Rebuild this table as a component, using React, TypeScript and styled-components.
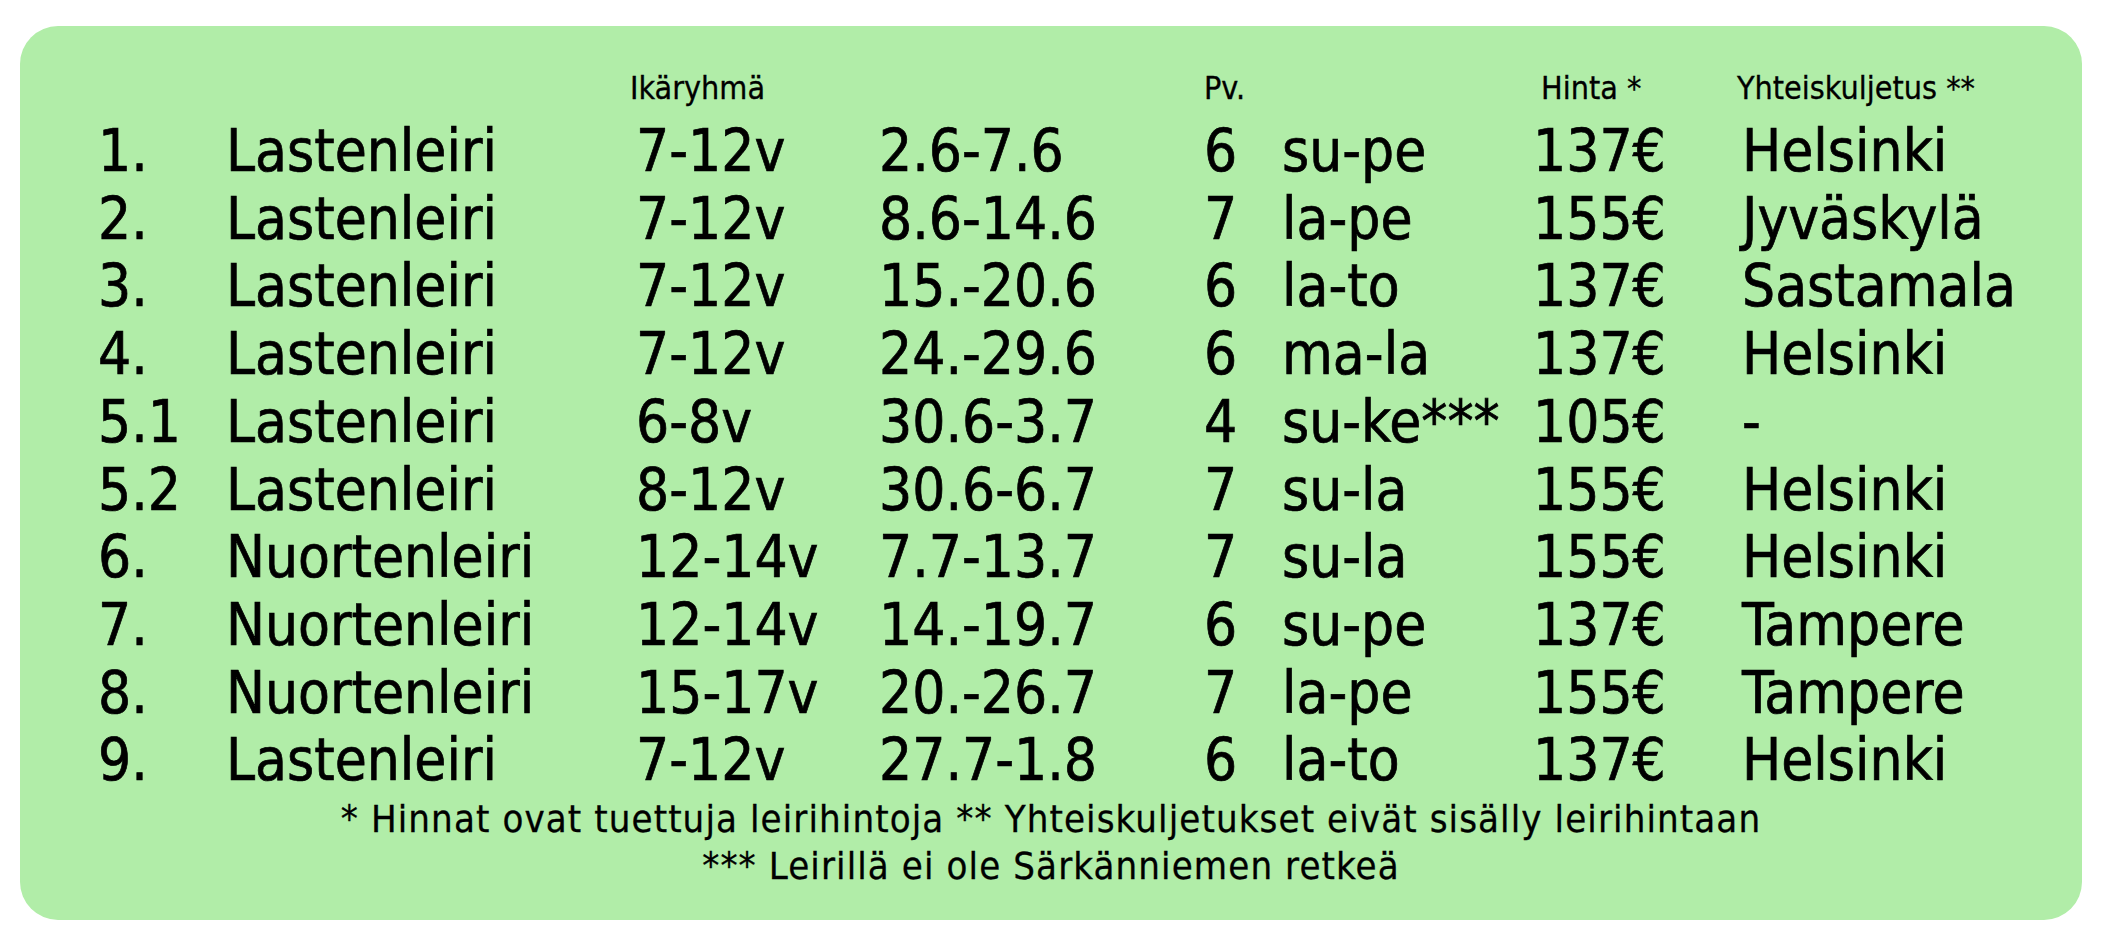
import styled, { createGlobalStyle } from "styled-components";

const GlobalStyle = createGlobalStyle`
  html, body {
    margin: 0;
    padding: 0;
    background: #ffffff;
  }
  body {
    font-family: "DejaVu Sans Condensed", "DejaVu Sans", sans-serif;
    color: #000;
  }
`;

const Page = styled.div`
  padding: 26px 0 21px 20px;
`;

const Card = styled.div`
  box-sizing: border-box;
  width: 2062px;
  height: 894px;
  padding-top: 42px;
  background: #b1eda8;
  border-radius: 38px;
`;

const Table = styled.div`
  margin-left: 78px;
  display: grid;
  grid-template-columns: 128px 410px 243px 325px 78px 251px 209px auto;
`;

const HeadCell = styled.div<{ $shift?: number }>`
  font-size: 32px;
  line-height: 40px;
  height: 40px;
  margin-bottom: 10px;
  white-space: nowrap;
  -webkit-text-stroke: 0.3px #000;
  transform: translateX(${(p) => p.$shift ?? 0}px);
`;

const Cell = styled.div`
  font-size: 58px;
  line-height: 67.7px;
  white-space: nowrap;
  -webkit-text-stroke: 0.7px #000;
`;

const Notes = styled.div`
  text-align: center;
  font-size: 38px;
  letter-spacing: 1.1px;
  line-height: 47px;
  margin-top: 1px;
  -webkit-text-stroke: 0.3px #000;
`;

type Row = [string, string, string, string, string, string, string, string];

const rows: Row[] = [
  ["1.", "Lastenleiri", "7-12v", "2.6-7.6", "6", "su-pe", "137€", "Helsinki"],
  ["2.", "Lastenleiri", "7-12v", "8.6-14.6", "7", "la-pe", "155€", "Jyväskylä"],
  ["3.", "Lastenleiri", "7-12v", "15.-20.6", "6", "la-to", "137€", "Sastamala"],
  ["4.", "Lastenleiri", "7-12v", "24.-29.6", "6", "ma-la", "137€", "Helsinki"],
  ["5.1", "Lastenleiri", "6-8v", "30.6-3.7", "4", "su-ke***", "105€", "-"],
  ["5.2", "Lastenleiri", "8-12v", "30.6-6.7", "7", "su-la", "155€", "Helsinki"],
  ["6.", "Nuortenleiri", "12-14v", "7.7-13.7", "7", "su-la", "155€", "Helsinki"],
  ["7.", "Nuortenleiri", "12-14v", "14.-19.7", "6", "su-pe", "137€", "Tampere"],
  ["8.", "Nuortenleiri", "15-17v", "20.-26.7", "7", "la-pe", "155€", "Tampere"],
  ["9.", "Lastenleiri", "7-12v", "27.7-1.8", "6", "la-to", "137€", "Helsinki"],
];

const App = () => {
  return (
    <>
      <GlobalStyle />
      <Page>
        <Card>
          <Table>
            <HeadCell />
            <HeadCell />
            <HeadCell $shift={-6}>Ikäryhmä</HeadCell>
            <HeadCell />
            <HeadCell>Pv.</HeadCell>
            <HeadCell />
            <HeadCell $shift={8}>Hinta *</HeadCell>
            <HeadCell $shift={-5}>Yhteiskuljetus **</HeadCell>
            {rows.map((row) =>
              row.map((value, i) => <Cell key={row[0] + i}>{value}</Cell>)
            )}
          </Table>
          <Notes>
            * Hinnat ovat tuettuja leirihintoja ** Yhteiskuljetukset eivät sisälly leirihintaan
            <br />
            *** Leirillä ei ole Särkänniemen retkeä
          </Notes>
        </Card>
      </Page>
    </>
  );
};

export default App;
